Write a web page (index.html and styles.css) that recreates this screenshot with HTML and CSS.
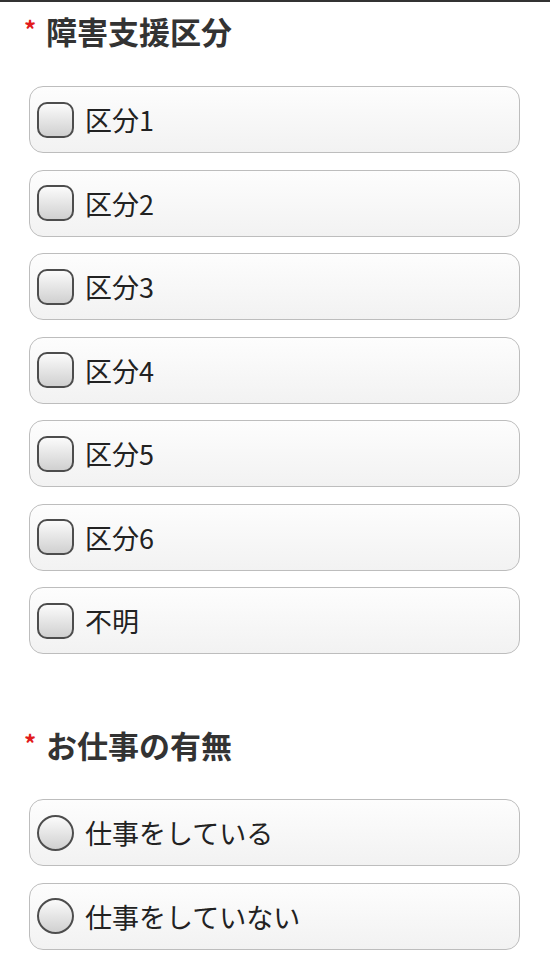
FILE: index.html
```html
<!DOCTYPE html>
<html lang="ja">
<head>
    <meta charset="UTF-8">
    <meta name="viewport" content="width=device-width, initial-scale=1.0">
    <title>障害支援区分</title>
    <link rel="stylesheet" href="styles.css">
</head>
<body>

<div class="section">
    <h2 class="title"><span class="req">*</span>障害支援区分</h2>
    <div class="choices">
        <label class="choice"><input type="checkbox" name="kubun" value="1"><span>区分1</span></label>
        <label class="choice"><input type="checkbox" name="kubun" value="2"><span>区分2</span></label>
        <label class="choice"><input type="checkbox" name="kubun" value="3"><span>区分3</span></label>
        <label class="choice"><input type="checkbox" name="kubun" value="4"><span>区分4</span></label>
        <label class="choice"><input type="checkbox" name="kubun" value="5"><span>区分5</span></label>
        <label class="choice"><input type="checkbox" name="kubun" value="6"><span>区分6</span></label>
        <label class="choice"><input type="checkbox" name="kubun" value="0"><span>不明</span></label>
    </div>
</div>

<div class="section section-next">
    <h2 class="title"><span class="req">*</span>お仕事の有無</h2>
    <div class="choices">
        <label class="choice"><input type="radio" name="work" value="1"><span>仕事をしている</span></label>
        <label class="choice"><input type="radio" name="work" value="0"><span>仕事をしていない</span></label>
    </div>
</div>

</body>
</html>
```

FILE: styles.css
```css
/* フォーム */
body {
    margin: 0;
    border-top: 2px solid #333;
    background: #fff;
    font-family: "Noto Sans CJK JP", "Noto Sans", sans-serif;
    color: #222;
}
.section {
    padding: 0 30px 0 29px;
}
.section-next {
    margin-top: 71px;
}
.title {
    margin: 9px 0 35px -5px;
    font-size: 31px;
    line-height: 40px;
    font-weight: bold;
    color: #333;
    display: flex;
    align-items: center;
}
.section-next .title {
    margin-bottom: 34px;
}
.req {
    color: #e21b1b;
    font-size: 24px;
    line-height: 22px;
    width: 12px;
    margin-right: 10px;
    align-self: flex-start;
    margin-top: 7px;
}
.choices {
    display: flex;
    flex-direction: column;
    gap: 16.5px;
}
.choice {
    display: flex;
    align-items: center;
    height: 67px;
    box-sizing: border-box;
    padding-left: 7px;
    border: 1.5px solid #bdbdbd;
    border-radius: 14px;
    background: linear-gradient(#fdfdfd, #f2f2f2);
    font-size: 27px;
}
.choice input {
    appearance: none;
    -webkit-appearance: none;
    margin: 0 11px 0 0;
    width: 37px;
    height: 36px;
    box-sizing: border-box;
    border: 2.5px solid #4d4d4d;
    border-radius: 10px;
    background: linear-gradient(#fbfbfb, #d0d0d0);
}
.choice input[type="radio"] {
    border-radius: 50%;
}
```
